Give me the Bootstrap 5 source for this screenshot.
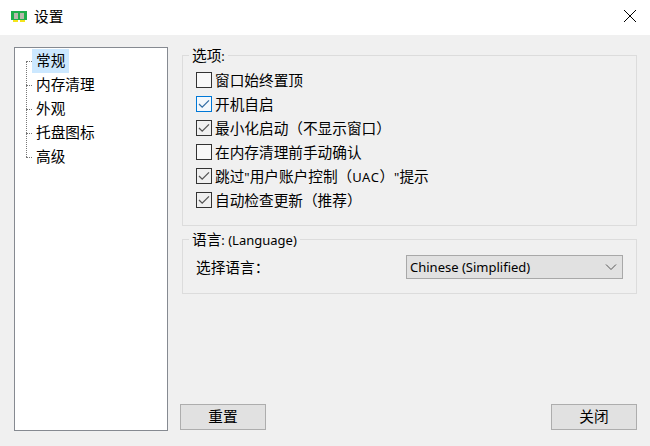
<!DOCTYPE html>
<html lang="zh-CN">
<head>
    <meta charset="UTF-8">
    <title>设置</title>
    <link href="https://cdn.jsdelivr.net/npm/bootstrap@5.3.0/dist/css/bootstrap.min.css" rel="stylesheet">
    <style>
        html, body {
            width: 650px;
            height: 446px;
            overflow: hidden;
        }
        body {
            background-color: #f0f0f0;
            color: #000;
            font-family: "Noto Sans CJK SC", "Liberation Sans", sans-serif;
            font-size: 14.67px;
            line-height: 24px;
        }
        .title-bar {
            height: 35px;
            padding: 0 13px 3px 11px;
            background: #fff;
        }
        .title-text {
            margin-left: 7px;
            font-size: 14.67px;
            line-height: 22px;
        }
        .settings-body {
            height: 411px;
            padding: 12px 13px 0 14px;
        }
        .tree-box {
            position: relative;
            width: 154px;
            height: 384px;
            padding: 1px 0 0 17px;
            background: #fff;
            border: 1px solid #868a91;
            flex: none;
        }
        .tree-item {
            position: relative;
            width: max-content;
            height: 24px;
            padding: 0 4px;
            line-height: 22px;
        }
        .tree-item.selected {
            background: #cce8ff;
        }
        .tree-item::before {
            content: "";
            position: absolute;
            left: -6px;
            top: 12px;
            width: 6px;
            border-top: 1px dotted #777;
        }
        .tree-item::after {
            content: "";
            position: absolute;
            left: -6px;
            top: -12px;
            height: 24px;
            border-left: 1px dotted #777;
        }
        .tree-item:first-child::after {
            display: none;
        }
        .panels {
            width: 455px;
            margin-left: 14px;
            flex: none;
        }
        .group-box {
            margin: 0;
            min-width: 0;
            padding: 0 0 0 13px;
            border: 1px solid #dcdcdc;
        }
        .group-box legend {
            float: none;
            width: auto;
            margin: 0 0 0 -7px;
            padding: 0 3px;
            font-size: 14.67px;
            line-height: 16px;
        }
        .options-group {
            height: 179px;
        }
        .language-group {
            height: 63px;
            margin-top: 5px;
        }
        .option-row {
            height: 24px;
            margin: 0;
            padding: 0;
            min-height: 0;
            gap: 3px;
        }
        .options-list {
            padding-top: 4px;
        }
        .option-row .form-check-input {
            flex: none;
            float: none;
            width: 16px;
            height: 16px;
            margin: 0;
            background-color: #f8f8f8;
            border: 1px solid #333;
            border-radius: 0;
        }
        .option-row .form-check-input:checked {
            background-color: #f0f0f0;
            border-color: #333;
            background-size: 12px 12px;
            background-image: url("data:image/svg+xml,%3csvg xmlns='http://www.w3.org/2000/svg' viewBox='0 0 12 12'%3e%3cpath fill='none' stroke='%23555' stroke-width='1.3' d='M1 6l3.2 3.2L11 2.4'/%3e%3c/svg%3e");
        }
        .option-row .form-check-input.hovered:checked {
            border-color: #0078d7;
            background-color: #f4f8fc;
            background-image: url("data:image/svg+xml,%3csvg xmlns='http://www.w3.org/2000/svg' viewBox='0 0 12 12'%3e%3cpath fill='none' stroke='%23336ea5' stroke-width='1.3' d='M1 6l3.2 3.2L11 2.4'/%3e%3c/svg%3e");
        }
        .option-row .form-check-label {
            line-height: 22px;
            white-space: nowrap;
        }
        .latin-text {
            font-family: "Noto Sans", "Liberation Sans", sans-serif;
            font-size: 13px;
        }
        .uac-text {
            letter-spacing: 0.5px;
        }
        .language-row {
            padding: 7px 13px 0 0;
        }
        .language-select {
            width: 217px;
            height: 24px;
            padding: 0 20px 0 3px;
            color: #000;
            font-family: "Noto Sans", "Liberation Sans", sans-serif;
            font-size: 13px;
            line-height: 22px;
            background-color: #e1e1e1;
            background-size: 12px 12px;
            background-position: right 5px center;
            background-image: url("data:image/svg+xml,%3csvg xmlns='http://www.w3.org/2000/svg' viewBox='0 0 12 12'%3e%3cpath fill='none' stroke='%23555' d='M1 3.5l5 5 5-5'/%3e%3c/svg%3e");
            border: 1px solid #a8a8a8;
            border-radius: 0;
        }
        .panels-column {
            height: 384px;
        }
        .footer-row {
            margin: auto 0 1px -2px;
        }
        .win-btn {
            width: 86px;
            height: 26px;
            padding: 0 0 2px;
            color: #000;
            font-size: 14.67px;
            line-height: 20px;
            background: #e1e1e1;
            border: 1px solid #adadad;
            border-radius: 0;
        }
    </style>
</head>
<body>

<!-- Title bar -->
<div class="title-bar d-flex align-items-center">
    <svg width="16" height="11" viewBox="0 0 16 11">
        <rect x="0" y="0" width="16" height="9" fill="#1fae4b"/>
        <rect x="3" y="2" width="4" height="6" fill="#b9b9ac"/>
        <rect x="9" y="2" width="4" height="6" fill="#b9b9ac"/>
        <rect x="2" y="9" width="5" height="2" fill="#f4e41c"/>
        <rect x="9" y="9" width="5" height="2" fill="#f4e41c"/>
    </svg>
    <span class="title-text">设置</span>
    <svg class="ms-auto" width="14" height="14" viewBox="0 0 14 14">
        <path d="M1 1l12 12M13 1L1 13" stroke="#000" stroke-width="1" fill="none"/>
    </svg>
</div>

<div class="settings-body d-flex">
    <!-- Left tree -->
    <div class="tree-box">
        <div class="tree-item selected">常规</div>
        <div class="tree-item">内存清理</div>
        <div class="tree-item">外观</div>
        <div class="tree-item">托盘图标</div>
        <div class="tree-item">高级</div>
    </div>

    <div class="panels panels-column d-flex flex-column">
        <fieldset class="group-box options-group">
            <legend>选项<span class="latin-text">:</span></legend>
            <div class="options-list">
                <div class="form-check option-row d-flex align-items-center">
                    <input class="form-check-input" type="checkbox" id="opt1">
                    <label class="form-check-label" for="opt1">窗口始终置顶</label>
                </div>
                <div class="form-check option-row d-flex align-items-center">
                    <input class="form-check-input hovered" type="checkbox" id="opt2" checked>
                    <label class="form-check-label" for="opt2">开机自启</label>
                </div>
                <div class="form-check option-row d-flex align-items-center">
                    <input class="form-check-input" type="checkbox" id="opt3" checked>
                    <label class="form-check-label" for="opt3">最小化启动&#xFF08;不显示窗口&#xFF09;</label>
                </div>
                <div class="form-check option-row d-flex align-items-center">
                    <input class="form-check-input" type="checkbox" id="opt4">
                    <label class="form-check-label" for="opt4">在内存清理前手动确认</label>
                </div>
                <div class="form-check option-row d-flex align-items-center">
                    <input class="form-check-input" type="checkbox" id="opt5" checked>
                    <label class="form-check-label" for="opt5">跳过<span class="latin-text">"</span>用户账户控制&#xFF08;<span class="latin-text uac-text">UAC</span>&#xFF09;<span class="latin-text">"</span>提示</label>
                </div>
                <div class="form-check option-row d-flex align-items-center">
                    <input class="form-check-input" type="checkbox" id="opt6" checked>
                    <label class="form-check-label" for="opt6">自动检查更新&#xFF08;推荐&#xFF09;</label>
                </div>
            </div>
        </fieldset>

        <fieldset class="group-box language-group">
            <legend>语言<span class="latin-text">: (Language)</span></legend>
            <div class="language-row d-flex align-items-center justify-content-between">
                <label for="langSelect">选择语言&#xFF1A;</label>
                <select class="form-select language-select" id="langSelect">
                    <option>Chinese (Simplified)</option>
                </select>
            </div>
        </fieldset>

        <div class="footer-row d-flex justify-content-between">
            <button type="button" class="btn win-btn">重置</button>
            <button type="button" class="btn win-btn">关闭</button>
        </div>
    </div>
</div>

<script src="https://cdn.jsdelivr.net/npm/bootstrap@5.3.0/dist/js/bootstrap.bundle.min.js"></script>
</body>
</html>
